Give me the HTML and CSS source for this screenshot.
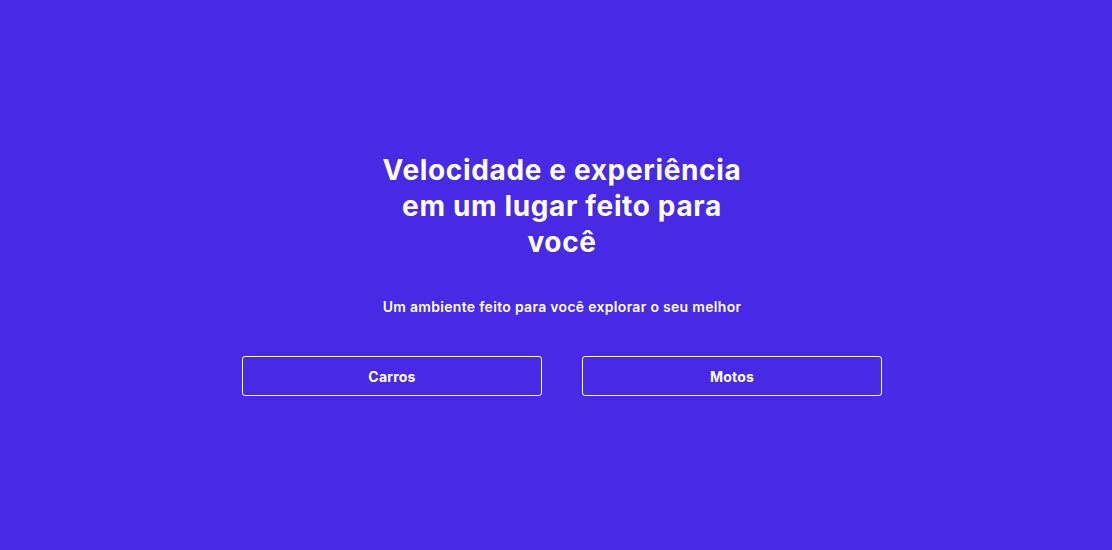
FILE: index.html
```html
<!DOCTYPE html>
<html lang="pt-BR">
<head>
<meta charset="utf-8">
<title>Velocidade e experiência</title>
<link rel="stylesheet" href="styles.css">
</head>
<body>
<main class="hero">
  <h1 class="hero-title">Velocidade e experiência<br>em um lugar feito para<br>você</h1>
  <p class="hero-subtitle">Um ambiente feito para você explorar o seu melhor</p>
  <div class="hero-actions">
    <a class="hero-button" href="#">Carros</a>
    <a class="hero-button" href="#">Motos</a>
  </div>
</main>
</body>
</html>
```
FILE: styles.css
```css
* { box-sizing: border-box; }
html, body { margin: 0; height: 100%; }
body {
  background: #4729e6;
  color: #ffffff;
  font-family: Inter, "Noto Sans", sans-serif;
}
.hero {
  height: 100%;
  padding-left: 12px;
  padding-bottom: 2px;
  display: flex;
  flex-direction: column;
  align-items: center;
  justify-content: center;
}
.hero-title {
  margin: 0;
  font-size: 28px;
  line-height: 36px;
  font-weight: 700;
  letter-spacing: 0.65px;
  text-align: center;
}
.hero-subtitle {
  margin: 37px 0 0;
  font-size: 14px;
  line-height: 20px;
  font-weight: 600;
  letter-spacing: 0.3px;
  text-align: center;
}
.hero-actions {
  margin-top: 39px;
  display: flex;
  gap: 40px;
}
.hero-button {
  width: 300px;
  height: 40px;
  display: flex;
  align-items: center;
  justify-content: center;
  border: 1px solid #ffffff;
  border-radius: 3px;
  color: #ffffff;
  text-decoration: none;
  font-size: 14px;
  font-weight: 700;
  letter-spacing: 0.2px;
}
```
